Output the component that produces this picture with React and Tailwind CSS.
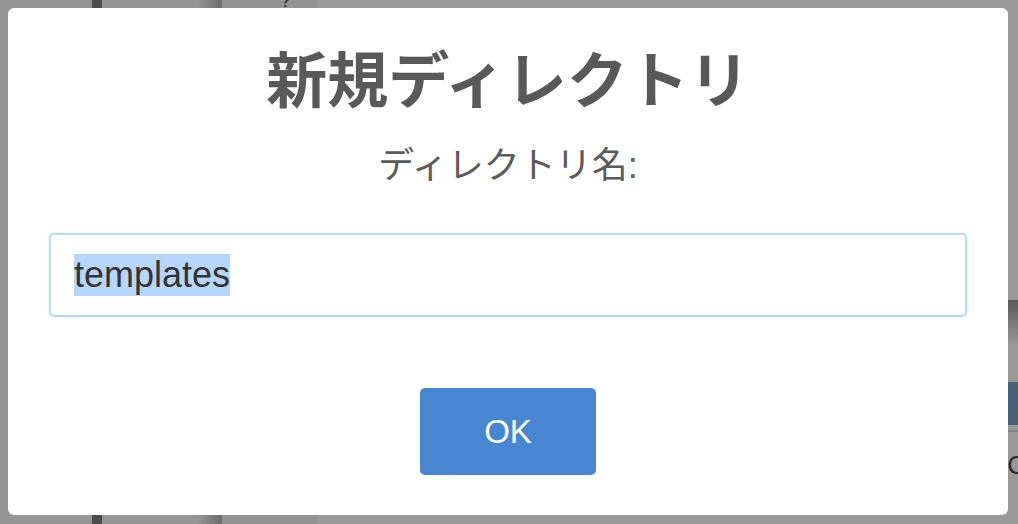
import React from "react";

const App = () => {
  return (
    <main className="relative w-[1018px] h-[524px] overflow-hidden bg-[#969696] font-['Noto_Sans_CJK_JP',sans-serif]">
      {/* Dimmed page behind the dialog */}
      <div className="flex h-full">
        <div className="w-[92px] bg-[#959595]" />
        <div className="w-[10px] bg-[#4c4c4c]" />
        <div className="w-[120px] bg-gradient-to-r from-[#959595] from-80% to-[#6c6c6c]" />
        <div className="w-[96px] bg-[#939393] flex pl-[58px]">
          <span className="text-[#2b2b2b] text-[20px] leading-none -mt-[10px] font-['Liberation_Sans',sans-serif]">?</span>
        </div>
        <div className="flex-1 flex flex-col bg-[#989898]">
          <div className="h-[300px]" />
          <div className="h-[45px] bg-gradient-to-b from-[#5a5a5a] to-[#999999]" />
          <div className="h-[37px]" />
          <div className="h-[43px] bg-[#4b6079]" />
          <div className="h-[5px]" />
          <div className="h-[2px] bg-[#858585]" />
          <div className="flex-1 flex justify-end items-start pt-[20px]">
            <span className="text-[#2b2b2b] text-[26px] leading-none -mr-[8px] font-['Liberation_Sans',sans-serif]">C</span>
          </div>
        </div>
      </div>

      {/* Dialog */}
      <div className="absolute top-[8px] left-[8px] right-[10px] bottom-[9px] bg-white rounded-[6px] flex flex-col items-center pt-[39px] pb-[40px]">
        <h2 className="text-[61px] leading-[60px] font-bold text-[#595959]">
          新規ディレクトリ
        </h2>
        <p className="mt-[38px] text-[36px] leading-[35px] text-[#5b5b5b] font-normal">
          ディレクトリ名<span className="font-['Liberation_Sans',sans-serif]">:</span>
        </p>
        <div className="mt-[50px] self-stretch mx-[41px] h-[84px] border-2 border-[#b6dcf0] rounded-[5px] shadow-[0_0_3px_rgba(180,219,237,0.6)] flex items-center px-[23px]">
          <span className="bg-[#b8d6fb] text-[#333333] text-[36px] leading-[42px] font-['Liberation_Sans',sans-serif]">
            templates
          </span>
        </div>
        <button className="mt-[71px] w-[176px] h-[87px] rounded-[5px] bg-[#4886d2] text-white text-[33px] font-['Liberation_Sans',sans-serif]">
          OK
        </button>
      </div>
    </main>
  );
};

export default App;
